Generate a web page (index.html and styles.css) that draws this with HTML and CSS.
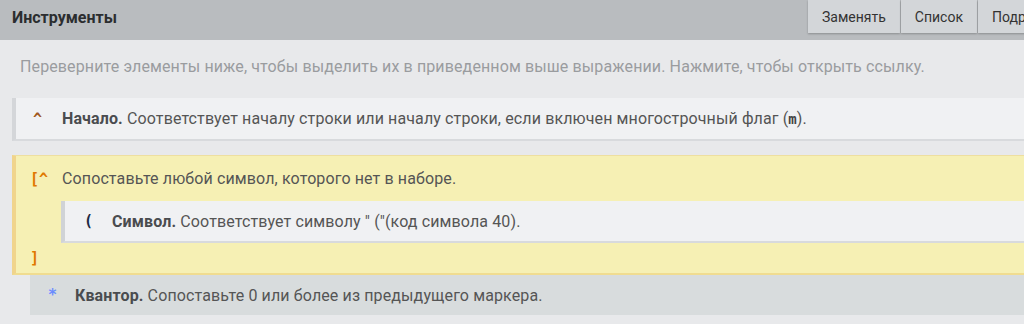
FILE: index.html
```html
<!DOCTYPE html>
<html lang="ru">
<head>
    <meta charset="UTF-8">
    <title>Инструменты</title>
    <link rel="stylesheet" href="styles.css">
</head>
<body>
    <div class="panel">
        <div class="panel-header">
            <div class="title">Инструменты</div>
            <div class="tabs">
                <div class="tab">Заменять</div>
                <div class="tab">Список</div>
                <div class="tab">Подробности</div>
            </div>
        </div>

        <div class="content">
            <p class="hint">Переверните элементы ниже, чтобы выделить их в приведенном выше выражении. Нажмите, чтобы открыть ссылку.</p>

            <div class="token">
                <span class="code anchor">^</span>
                <span class="desc"><b>Начало.</b> Соответствует началу строки или началу строки, если включен многострочный флаг (<code>m</code>).</span>
            </div>

            <div class="token set">
                <div class="set-head">
                    <span class="code set-code">[^</span>
                    <span class="desc">Сопоставьте любой символ, которого нет в наборе.</span>
                </div>
                <div class="token child">
                    <span class="code char">(</span>
                    <span class="desc"><b>Символ.</b> Соответствует символу " ("(код символа 40).</span>
                </div>
                <div class="set-end"><span class="code set-code">]</span></div>
            </div>

            <div class="token quant">
                <span class="code star">*</span>
                <span class="desc"><b>Квантор.</b> Сопоставьте 0 или более из предыдущего маркера.</span>
            </div>
        </div>
    </div>
</body>
</html>
```

FILE: styles.css
```css
body {
    margin: 0;
    background: #e8e9eb;
    font-family: Roboto, "Noto Sans", sans-serif;
    font-size: 16px;
    overflow: hidden;
}

.panel-header {
    display: flex;
    height: 40px;
    background: #b9bcbf;
    overflow: hidden;
}

.title {
    flex: 0 0 796px;
    padding: 8px 0 0 12px;
    font-weight: 700;
    font-size: 16px;
    color: #2b2d2f;
}

.tabs {
    display: flex;
    flex-shrink: 0;
    height: 33px;
}

.tab {
    display: flex;
    align-items: center;
    padding: 0 14px;
    margin-right: 1px;
    background: #d3d6d9;
    color: #333;
    font-size: 14px;
    box-shadow: 0 1px 2px rgba(0, 0, 0, 0.25);
}

.content {
    padding: 0 0 0 12px;
}

.hint {
    margin: 0;
    padding: 17px 8px 0;
    height: 41px;
    color: #9a9c9f;
    letter-spacing: 0.12px;
}

.token {
    display: flex;
    align-items: center;
    min-height: 43px;
    background: #f0f1f3;
    border-left: 4px solid #d4d6d9;
    border-bottom: 2px solid #d8dadd;
    box-sizing: border-box;
    color: #555;
}

.desc {
    letter-spacing: 0.12px;
}

.code {
    font-family: "DejaVu Sans Mono", "Liberation Mono", monospace;
    font-weight: 700;
    font-size: 15px;
    width: 46px;
    padding-left: 17px;
    box-sizing: border-box;
    flex-shrink: 0;
}

.desc b {
    color: #4a4c4f;
}

.desc code {
    font-family: "DejaVu Sans Mono", monospace;
    font-weight: 700;
    font-size: 14px;
    color: #444;
}

.anchor {
    color: #a0581e;
}

.set {
    display: block;
    margin-top: 14px;
    background: #f6f0b4;
    border-left: 4px solid #f0d48c;
    border-top: 1px solid #eedfa0;
    border-bottom: 2px solid #f0dc90;
}

.set-head {
    display: flex;
    align-items: center;
    height: 45px;
}

.set-code {
    color: #e07800;
    padding-left: 14px;
}

.child {
    margin-left: 45px;
    min-height: 42px;
    border-left-color: #d0d3d6;
}

.char {
    color: #1c2a44;
    width: 47px;
    padding-left: 19px;
}

.set-end {
    height: 30px;
    display: flex;
    align-items: center;
}

.quant {
    margin-left: 18px;
    min-height: 40px;
    background: #d8dcdd;
    border: none;
}

.star {
    color: #6b8cff;
    width: 45px;
    padding-left: 18px;
}
```
